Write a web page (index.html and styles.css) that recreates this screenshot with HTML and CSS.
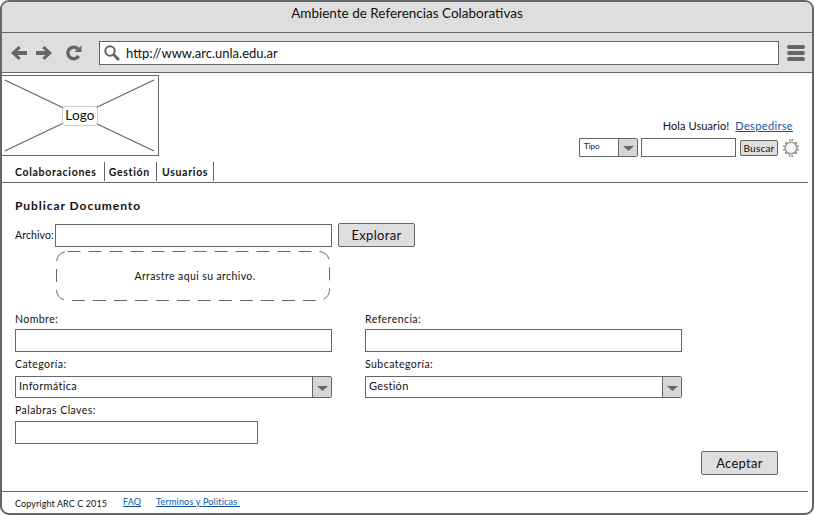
FILE: index.html
```html
<!DOCTYPE html>
<html lang="es">
<head>
<meta charset="utf-8">
<title>Ambiente de Referencias Colaborativas</title>
<link rel="stylesheet" href="styles.css">
</head>
<body>
<div class="window">
  <div class="titlebar">Ambiente de Referencias Colaborativas</div>
  <div class="toolbar">
    <svg class="nav-icon" width="16" height="14" viewBox="0 0 16 14"><path d="M7.500 0 0 7l7.500 7 2.300-2.200L6.500 9H16V5H6.500l3.300-2.800z" fill="#666"/></svg>
    <svg class="nav-icon fwd" width="16" height="14" viewBox="0 0 16 14"><path d="M8.500 0 16 7l-7.500 7-2.300-2.200L9.500 9H0V5h9.500L6.200 2.200z" fill="#666"/></svg>
    <svg class="nav-icon reload" width="16" height="16" viewBox="0 0 16 16"><path d="M12.600 11A5.800 5.800 0 1 1 11.800 3.800" fill="none" stroke="#666" stroke-width="3.400"/><path d="M8.500 7 15.500.5V7z" fill="#666"/></svg>
    <div class="url">
      <svg width="16" height="16" viewBox="0 0 16 16"><circle cx="6" cy="6" r="4.700" fill="none" stroke="#666" stroke-width="2"/><path d="M9.500 9.500 15 15" stroke="#666" stroke-width="3"/></svg>
      <span>http://www.arc.unla.edu.ar</span>
    </div>
    <div class="burger"><i></i><i></i><i></i></div>
  </div>

  <header class="head">
    <div class="logo">
      <svg width="156" height="79" viewBox="0 0 156 79"><path d="M2.700 4 152 75M152 4 2.700 75" stroke="#666" stroke-width="1.200" fill="none"/></svg>
      <span class="logo-label">Logo</span>
    </div>
    <div class="session">
      <div class="greet"><span>Hola Usuario!</span><a href="#">Despedirse</a></div>
      <div class="search">
        <div class="select mini"><span>Tipo</span><b><svg width="11" height="5" viewBox="0 0 11 5"><path d="M0 0H11L5.500 5z" fill="#666"/></svg></b></div>
        <div class="box search-input"></div>
        <div class="btn small">Buscar</div>
        <svg class="gear" width="16" height="18" viewBox="0 0 16 18"><path d="M6 0h1.500v2H6zM8.500 0H10v2H8.500zM6 16h1.500v2H6zM8.500 16H10v2H8.500zM0 6.500h2V8H0zM0 10h2v1.500H0zM14 6.500h2V8h-2zM14 10h2v1.500h-2zM2 3h2v2H2zM12 3h2v2h-2zM2 13h2v2H2zM12 13h2v2h-2z" fill="#999"/><circle cx="8" cy="9" r="5.800" fill="#fff" stroke="#999" stroke-width="1.600"/><circle cx="8" cy="9" r="3" fill="none" stroke="#ccc" stroke-dasharray="1 1"/></svg>
      </div>
    </div>
  </header>

  <nav class="tabs">
    <a class="first">Colaboraciones</a><a class="second">Gestión</a><a>Usuarios</a>
  </nav>

  <main class="form">
    <h1>Publicar Documento</h1>
    <div class="file-row">
      <label>Archivo:</label>
      <div class="box file-input"></div>
      <div class="btn big">Explorar</div>
    </div>
    <div class="drop">
      <svg width="274" height="50" viewBox="0 0 274 50"><rect x="0.500" y="0.500" width="273" height="49" rx="11" fill="none" stroke="#666" stroke-dasharray="13 8"/></svg>
      <span>Arrastre aqui su archivo.</span>
    </div>
    <div class="grid">
      <div class="field"><label>Nombre:</label><div class="box"></div></div>
      <div class="field"><label>Referencia:</label><div class="box"></div></div>
      <div class="field"><label>Categoría:</label>
        <div class="select"><span>Informática</span><b><svg width="11" height="5" viewBox="0 0 11 5"><path d="M0 0H11L5.500 5z" fill="#666"/></svg></b></div>
      </div>
      <div class="field"><label>Subcategoría:</label>
        <div class="select"><span>Gestión</span><b><svg width="11" height="5" viewBox="0 0 11 5"><path d="M0 0H11L5.500 5z" fill="#666"/></svg></b></div>
      </div>
      <div class="field keywords"><label>Palabras Claves:</label><div class="box"></div></div>
    </div>
    <div class="actions"><div class="btn big">Aceptar</div></div>
  </main>

  <footer class="foot">
    <span class="copy">Copyright ARC C 2015</span>
    <a href="#">FAQ</a>
    <a class="terms" href="#">Terminos y Politicas&nbsp;</a>
  </footer>
</div>
</body>
</html>
```
FILE: styles.css
```css
* { box-sizing: border-box; }
html, body { margin: 0; padding: 0; background: #fff; }
body { width: 814px; height: 515px; overflow: hidden; font-family: "Lato", "Noto Sans", sans-serif; color: #111; }
a { color: #0b57a4; text-decoration: underline; }

.window { width: 814px; height: 515px; border: 2px solid #666; border-radius: 9px; overflow: hidden; display: flex; flex-direction: column; }

.titlebar { height: 31px; background: #dedede; border-bottom: 1px solid #666; display: flex; justify-content: center; padding-top: 2px; font-size: 13.500px; line-height: 18px; }

.toolbar { height: 40px; background: #dedede; border-bottom: 1px solid #666; display: flex; align-items: center; padding-left: 9px; padding-top: 1px; }
.nav-icon { display: block; }
.fwd { margin-left: 9px; }
.reload { margin-left: 14px; }
.url { width: 680px; height: 24px; margin-left: 17px; background: #fff; border: 1px solid #666; display: flex; align-items: center; padding-left: 4px; gap: 6px; font-size: 13px; }
.burger { margin-left: 8px; width: 18px; display: flex; flex-direction: column; gap: 2px; }
.burger i { display: block; height: 4px; background: #666; border-radius: 2px; }

.head { height: 90px; display: flex; justify-content: space-between; padding-top: 2px; padding-right: 13px; align-items: flex-start; }
.logo { width: 158px; height: 81px; border: 1px solid #666; display: grid; place-items: center; margin-left: -1px; }
.logo svg, .logo-label { grid-area: 1 / 1; }
.logo svg { display: block; }
.logo-label { background: #fff; border: 1px solid #ccc; border-radius: 4px; padding: 0 2px; height: 20px; line-height: 17px; font-size: 13.500px; letter-spacing: 0.200px; }

.session { display: flex; flex-direction: column; align-items: flex-end; padding-top: 44px; }
.greet { display: flex; gap: 6px; font-size: 11px; letter-spacing: 0.100px; line-height: 14px; padding-right: 6px; }
.greet a { letter-spacing: 0.350px; }
.search { display: flex; align-items: center; margin-top: 5px; }
.search-input.box { width: 95px; height: 19px; margin-left: 3px; }
.small { width: 38px; height: 16px; margin-left: 4px; font-size: 10px; letter-spacing: 0.200px; }
.gear { margin-left: 5px; }

.box { height: 23px; border: 1px solid #666; background: #fff; }
.select { height: 22px; border: 1px solid #666; background: #fff; border-radius: 0 2px 2px 0; display: flex; justify-content: space-between; align-items: center; padding-left: 3px; font-size: 11px; letter-spacing: 0.300px; overflow: hidden; }
.select span { padding-bottom: 3px; }
.select b { align-self: stretch; width: 19px; background: #d6d6d6; border-left: 1px solid #666; display: flex; align-items: center; justify-content: center; padding-top: 2px; }
.select svg { display: block; }
.mini { width: 59px; height: 19px; font-size: 8px; letter-spacing: 0; padding-left: 4px; }
.btn { background: #dedede; border: 1px solid #666; border-radius: 2px; display: flex; align-items: center; justify-content: center; }
.big { width: 77px; height: 24px; font-size: 13px; letter-spacing: 0.300px; }

.tabs { height: 21px; margin-top: -1px; margin-right: 4px; border-bottom: 1px solid #666; display: flex; padding-left: 1px; font-size: 10.500px; font-weight: 700; letter-spacing: 0.700px; }
.tabs a { color: #111; text-decoration: none; height: 19px; line-height: 21px; border-right: 1px solid #666; padding: 0 5px; }
.tabs a.first { padding-left: 12px; padding-right: 7px; }
.tabs a.second { padding-left: 4px; padding-right: 6px; }

.form { flex: 1; padding: 15px 0 0 13px; display: flex; flex-direction: column; }
.form h1 { margin: 0; font-size: 12px; font-weight: 700; letter-spacing: 0.950px; line-height: 16px; }
.file-row { display: flex; align-items: center; margin-top: 9px; font-size: 10.500px; letter-spacing: 0.100px; }
.file-row label { width: 40px; }
.file-input { width: 277px; }
.file-row .btn { margin-left: 6px; }
.drop { width: 274px; height: 50px; margin: 4px 0 0 41px; display: grid; place-items: center; font-size: 10.500px; letter-spacing: 0.400px; }
.drop svg, .drop span { grid-area: 1 / 1; }
.drop svg { display: block; }
.drop span { padding-left: 4px; }

.grid { display: grid; grid-template-columns: 317px 317px; column-gap: 33px; row-gap: 5px; margin-top: 10px; }
.field label { display: block; height: 18px; line-height: 16px; font-size: 10.500px; letter-spacing: 0.450px; }
.field .box { height: 23px; }
.field:nth-child(n+3) label { height: 19px; line-height: 14px; }
.field.keywords label { height: 18px; line-height: 14px; }
.keywords { grid-column: 1; }
.keywords .box { width: 243px; }

.actions { display: flex; justify-content: flex-end; padding-right: 34px; margin-top: 7px; }
.foot { height: 22px; margin-right: 4px; border-top: 1px solid #666; display: flex; gap: 15px; padding-left: 13px; padding-top: 3px; font-size: 9px; letter-spacing: 0.100px; line-height: 14px; }
.copy { padding-top: 2px; margin-right: 1px; }
.terms { letter-spacing: 0.200px; }
```
